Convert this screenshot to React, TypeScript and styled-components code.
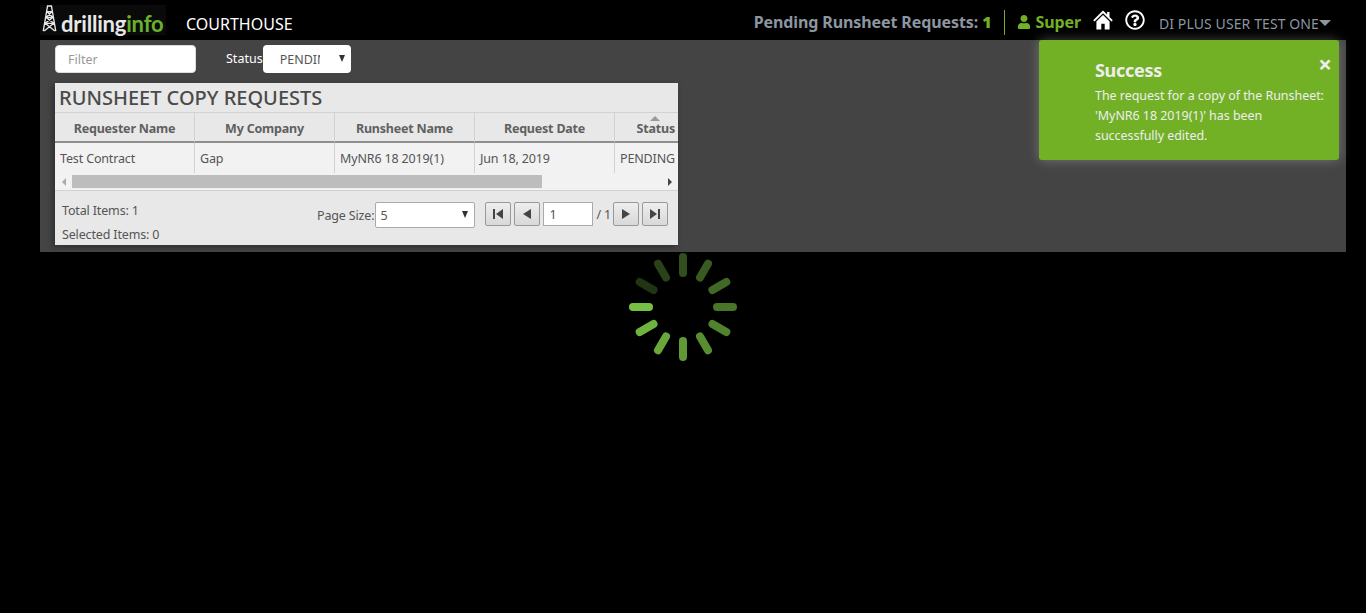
import * as React from "react";
import styled, { createGlobalStyle } from "styled-components";
import { FaRegQuestionCircle, FaUser } from "react-icons/fa";

const FONT = `"Noto Sans", "Open Sans", sans-serif`;
const GREEN = "#72b026";

const GlobalStyle = createGlobalStyle`
  html, body {
    margin: 0;
    padding: 0;
    background: #000;
    font-family: ${FONT};
    height: 100%;
  }
  * { box-sizing: border-box; }
`;

const columns = [
  { title: "Requester Name", value: "Test Contract" },
  { title: "My Company", value: "Gap" },
  { title: "Runsheet Name", value: "MyNR6 18 2019(1)" },
  { title: "Request Date", value: "Jun 18, 2019" },
  { title: "Status", value: "PENDING", sorted: true },
];

const spokes = Array.from({ length: 12 }, (_, index) => index);

const Derrick = () => (
  <svg width="15" height="27" viewBox="0 0 15 28" fill="none" stroke="#e8e8e8" strokeWidth="1.4">
    <path d="M5 1h5M5.5 1 1 27M9.5 1 14 27M4.4 7h6.2M3.4 13h8.2M2.4 19h10.2M5 7l6 6M10 7l-6 6M4 13l8 6M11 13l-8 6M3 19l10 8M12 19 2 27" />
  </svg>
);

const HomeIcon = () => (
  <svg width="20" height="20" viewBox="0 0 20 20" fill="#fff">
    <path d="M10 0.5 0.2 10.3l1.3 1.3L10 3.2l8.5 8.4 1.3-1.3-3.3-3.3V2h-2.4v2.6z" />
    <path d="M10 5 3.4 11.5V19.6h4.9v-5.8h3.4v5.8h4.9v-8.1z" />
  </svg>
);

const PagerIcon = ({ kind }: { kind: "first" | "prev" | "next" | "last" }) => (
  <svg width="12" height="12" viewBox="0 0 12 12" fill="#444">
    {kind === "first" && <path d="M1 1h2v10H1zM11 1v10L4 6z" />}
    {kind === "prev" && <path d="M10 1v10L2 6z" />}
    {kind === "next" && <path d="M2 1v10l8-5z" />}
    {kind === "last" && <path d="M9 1h2v10H9zM1 1v10l7-5z" />}
  </svg>
);

const App = () => (
  <Page>
    <GlobalStyle />
    <Header>
      <Brand>
        <Logo>
          <Derrick />
          <LogoText>
            drilling<em>info</em>
          </LogoText>
        </Logo>
        <AppName>COURTHOUSE</AppName>
      </Brand>
      <HeaderRight>
        <Pending>
          Pending Runsheet Requests: <b>1</b>
        </Pending>
        <Divider />
        <Role>
          <FaUser size={14} />
          Super
        </Role>
        <HomeLink>
          <HomeIcon />
        </HomeLink>
        <HelpLink>
          <FaRegQuestionCircle size={20} />
        </HelpLink>
        <UserMenu>
          DI PLUS USER TEST ONE
          <Caret />
        </UserMenu>
      </HeaderRight>
    </Header>

    <Content>
      <Toolbar>
        <FilterInput placeholder="Filter" />
        <StatusLabel>Status</StatusLabel>
        <StatusSelect>
          <StatusValue>PENDING</StatusValue>
          <SelectArrow />
        </StatusSelect>
      </Toolbar>

      <Grid>
        <GridTitle>RUNSHEET COPY REQUESTS</GridTitle>
        <Columns>
          {columns.map((column) => (
            <HeaderCell key={column.title} $sorted={column.sorted}>
              {column.sorted && <SortMark />}
              {column.title}
            </HeaderCell>
          ))}
        </Columns>
        <Columns>
          {columns.map((column) => (
            <BodyCell key={column.title}>{column.value}</BodyCell>
          ))}
        </Columns>
        <Scrollbar>
          <ScrollArrow $left />
          <ScrollTrack>
            <ScrollThumb />
          </ScrollTrack>
          <ScrollArrow />
        </Scrollbar>
        <GridFooter>
          <Counts>
            <span>Total Items: 1</span>
            <span>Selected Items: 0</span>
          </Counts>
          <PageSize>
            Page Size:
            <SizeSelect>
              5<SelectArrow />
            </SizeSelect>
          </PageSize>
          <Pager>
            <PagerButton>
              <PagerIcon kind="first" />
            </PagerButton>
            <PagerButton>
              <PagerIcon kind="prev" />
            </PagerButton>
            <PageInput>1</PageInput>
            <PageTotal>/ 1</PageTotal>
            <PagerButton>
              <PagerIcon kind="next" />
            </PagerButton>
            <PagerButton>
              <PagerIcon kind="last" />
            </PagerButton>
          </Pager>
        </GridFooter>
      </Grid>
    </Content>

    <Spinner>
      <svg width="108" height="108" viewBox="0 0 108 108">
        {spokes.map((spoke) => (
          <rect
            key={spoke}
            x="50"
            y="0"
            width="8"
            height="24"
            rx="4"
            fill="#78c043"
            opacity={0.28 + (((spoke + 2) % 12) / 11) * 0.72}
            transform={`rotate(${spoke * 30} 54 54)`}
          />
        ))}
      </svg>
    </Spinner>

    <Toast>
      <ToastClose>×</ToastClose>
      <ToastTitle>Success</ToastTitle>
      <ToastText>
        The request for a copy of the Runsheet: 'MyNR6 18 2019(1)' has been
        successfully edited.
      </ToastText>
    </Toast>
  </Page>
);

const Page = styled.div`
  position: relative;
  min-height: 613px;
  background: #000;
  overflow: hidden;
`;

const Header = styled.header`
  height: 40px;
  padding: 0 35px 0 40px;
  display: flex;
  justify-content: space-between;
  align-items: center;
`;

const Brand = styled.div`
  display: flex;
  align-items: center;
  gap: 20px;
`;

const Logo = styled.div`
  width: 126px;
  height: 30px;
  background: #0a0a0a;
  display: flex;
  align-items: flex-start;
  padding-left: 2px;
  gap: 4px;
`;

const LogoText = styled.span`
  font-family: "Lato", sans-serif;
  font-weight: 700;
  font-size: 22px;
  letter-spacing: -0.2px;
  color: #e8e8e8;
  margin-top: 8px;
  line-height: 22px;

  em {
    font-style: normal;
    color: #67b22f;
  }
`;

const AppName = styled.span`
  font-size: 16px;
  color: #fff;
  margin-top: 7px;
`;

const HeaderRight = styled.div`
  display: flex;
  align-items: center;
`;

const Pending = styled.span`
  font-size: 16px;
  font-weight: 700;
  color: #8c96a0;
  letter-spacing: -0.1px;
  margin-top: 4px;

  b {
    color: ${GREEN};
  }
`;

const Divider = styled.span`
  width: 1px;
  height: 25px;
  background: ${GREEN};
  margin: 4px 12px 0 13px;
`;

const Role = styled.span`
  display: flex;
  align-items: center;
  gap: 4px;
  font-size: 16px;
  font-weight: 700;
  letter-spacing: -0.1px;
  color: ${GREEN};
  margin-top: 4px;
`;

const HomeLink = styled.span`
  display: flex;
  margin: -1px 12px 0;
`;

const HelpLink = styled.span`
  display: flex;
  color: #fff;
`;

const UserMenu = styled.span`
  display: flex;
  align-items: center;
  font-size: 14px;
  color: #8c96a0;
  margin-left: 14px;
  margin-top: 7px;
  letter-spacing: 0.1px;
`;

const Caret = styled.i`
  border-left: 6px solid transparent;
  border-right: 6px solid transparent;
  border-top: 6px solid #8c96a0;
  margin-top: -1px;
`;

const Content = styled.main`
  margin: 0 20px 0 40px;
  height: 212px;
  background: #444;
  padding: 5px 15px;
`;

const Toolbar = styled.div`
  height: 38px;
  display: flex;
  align-items: flex-start;
`;

const FilterInput = styled.input`
  width: 141px;
  height: 28px;
  border: 1px solid #ddd;
  border-radius: 4px;
  padding: 0 12px;
  font: 12.5px ${FONT};
  background: #fff;

  &::placeholder {
    color: #999;
  }
`;

const StatusLabel = styled.span`
  margin-left: 30px;
  font-size: 12.5px;
  line-height: 27px;
  color: #fff;
`;

const StatusSelect = styled.div`
  width: 88px;
  height: 28px;
  background: #fff;
  border-radius: 4px;
  position: relative;
  display: flex;
  align-items: center;
  padding-left: 17px;
  font-size: 12.5px;
  color: #555;
`;

const StatusValue = styled.span`
  width: 40px;
  overflow: hidden;
  white-space: nowrap;
`;

const SelectArrow = styled.i`
  position: absolute;
  right: 6px;
  top: 50%;
  margin-top: -4px;
  border-left: 3.5px solid transparent;
  border-right: 3.5px solid transparent;
  border-top: 7px solid #333;
`;

const Grid = styled.section`
  width: 623px;
  height: 162px;
  background: #e8e8e8;
  box-shadow: -2px 2px 6px rgba(0, 0, 0, 0.35);
  display: flex;
  flex-direction: column;
  color: #555;
  overflow: hidden;
`;

const GridTitle = styled.h2`
  margin: 0;
  height: 30px;
  flex: none;
  padding-left: 4px;
  font-size: 20px;
  line-height: 30px;
  font-weight: 500;
  color: #4a4a4a;
  border-bottom: 1px solid #d2d2d2;
`;

const Columns = styled.div`
  display: grid;
  grid-template-columns: repeat(4, 140px) 63px;
  flex: none;
`;

const HeaderCell = styled.div<{ $sorted?: boolean }>`
  position: relative;
  height: 30px;
  font-size: 12.5px;
  font-weight: 700;
  letter-spacing: -0.2px;
  line-height: 31px;
  text-align: ${({ $sorted }) => ($sorted ? "right" : "center")};
  padding-right: ${({ $sorted }) => ($sorted ? "3px" : "0")};
  border-right: ${({ $sorted }) => ($sorted ? "none" : "1px solid #d2d2d2")};
  border-bottom: 2px solid #8f8f8f;
  color: #606060;
  white-space: nowrap;
`;

const SortMark = styled.i`
  position: absolute;
  left: 35px;
  top: 3px;
  border-left: 5px solid transparent;
  border-right: 5px solid transparent;
  border-bottom: 5px solid #999;
`;

const BodyCell = styled.div`
  height: 30px;
  background: #f2f2f2;
  padding-left: 5px;
  font-size: 12.5px;
  line-height: 31px;
  letter-spacing: -0.15px;
  border-right: 1px solid #d2d2d2;
  white-space: nowrap;
  overflow: hidden;

  &:last-child {
    border-right: none;
  }
`;

const Scrollbar = styled.div`
  height: 18px;
  flex: none;
  background: #f2f2f2;
  display: flex;
  align-items: center;
  border-bottom: 1px solid #d2d2d2;
`;

const ScrollTrack = styled.div`
  flex: 1;
  height: 13px;
`;

const ScrollThumb = styled.div`
  width: 470px;
  height: 13px;
  background: #bdbdbd;
`;

const ScrollArrow = styled.i<{ $left?: boolean }>`
  width: 17px;
  display: flex;
  justify-content: center;

  &::before {
    content: "";
    border-top: 4px solid transparent;
    border-bottom: 4px solid transparent;
    ${({ $left }) =>
      $left ? "border-right: 4px solid #aaa;" : "border-left: 4px solid #444;"}
  }
`;

const GridFooter = styled.div`
  flex: 1;
  display: flex;
  align-items: flex-start;
  padding: 11px 10px 0 7px;
  font-size: 12.5px;
  letter-spacing: -0.15px;
`;

const Counts = styled.div`
  display: flex;
  flex-direction: column;
  gap: 7px;
  width: 255px;
  line-height: 17px;
`;

const PageSize = styled.div`
  display: flex;
  align-items: center;
  gap: 1px;
  height: 26px;
`;

const SizeSelect = styled.div`
  position: relative;
  width: 100px;
  height: 26px;
  background: #fff;
  border: 1px solid #aaa;
  border-radius: 2px;
  padding-left: 4px;
  line-height: 25px;
`;

const Pager = styled.div`
  margin-left: auto;
  display: flex;
  align-items: center;
  gap: 3px;
  height: 24px;
`;

const PagerButton = styled.button`
  width: 26px;
  height: 24px;
  padding: 0;
  display: flex;
  align-items: center;
  justify-content: center;
  background: linear-gradient(#eee, #d8d8d8);
  border: 1px solid #999;
  border-radius: 2px;
`;

const PageInput = styled.div`
  width: 50px;
  height: 24px;
  background: #fff;
  border: 1px solid #aaa;
  padding-left: 5px;
  line-height: 23px;
`;

const PageTotal = styled.span`
  margin-right: -1px;
`;

const Spinner = styled.div`
  display: flex;
  justify-content: center;
  margin-top: 1px;
`;

const Toast = styled.aside`
  position: absolute;
  left: 1039px;
  top: 40px;
  width: 300px;
  height: 120px;
  padding: 18px 12px 0 56px;
  background: ${GREEN};
  border-radius: 3px;
  box-shadow: 0 0 12px rgba(255, 255, 255, 0.28);
  color: #eee;
`;

const ToastClose = styled.span`
  position: absolute;
  right: 7px;
  top: 12px;
  font-size: 24px;
  line-height: 24px;
  font-weight: 700;
`;

const ToastTitle = styled.div`
  font-size: 18px;
  font-weight: 700;
  line-height: 24px;
  letter-spacing: -0.3px;
`;

const ToastText = styled.div`
  margin-top: 4px;
  font-size: 12.5px;
  line-height: 20px;
  letter-spacing: -0.05px;
`;

export default App;
